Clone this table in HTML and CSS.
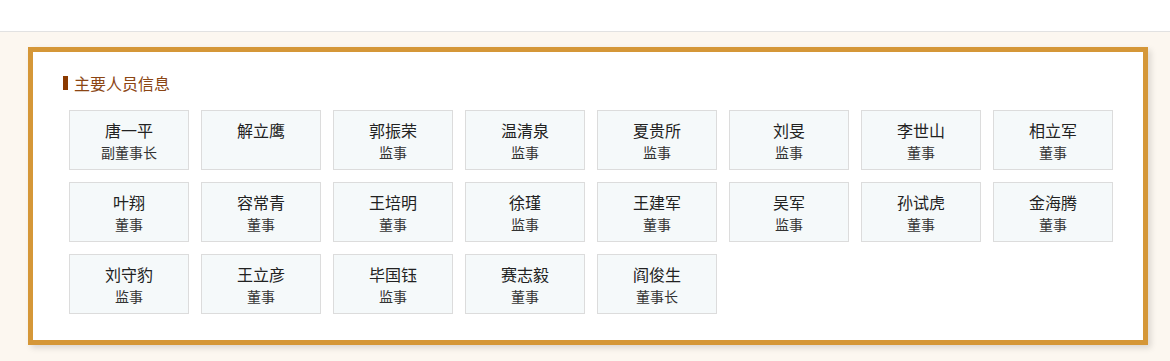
FILE: index.html
```html
<!DOCTYPE html>
<html lang="zh-CN">
<head>
<meta charset="utf-8">
<title>主要人员信息</title>
<link rel="stylesheet" href="styles.css">
</head>
<body>
<div class="topbar"></div>
<main class="page">
  <section class="card">
    <h2 class="title">主要人员信息</h2>
    <ul class="grid">
      <li class="person"><span class="name">唐一平</span><span class="role">副董事长</span></li>
      <li class="person"><span class="name">解立鹰</span><span class="role"></span></li>
      <li class="person"><span class="name">郭振荣</span><span class="role">监事</span></li>
      <li class="person"><span class="name">温清泉</span><span class="role">监事</span></li>
      <li class="person"><span class="name">夏贵所</span><span class="role">监事</span></li>
      <li class="person"><span class="name">刘旻</span><span class="role">监事</span></li>
      <li class="person"><span class="name">李世山</span><span class="role">董事</span></li>
      <li class="person"><span class="name">相立军</span><span class="role">董事</span></li>
      <li class="person"><span class="name">叶翔</span><span class="role">董事</span></li>
      <li class="person"><span class="name">容常青</span><span class="role">董事</span></li>
      <li class="person"><span class="name">王培明</span><span class="role">董事</span></li>
      <li class="person"><span class="name">徐瑾</span><span class="role">监事</span></li>
      <li class="person"><span class="name">王建军</span><span class="role">董事</span></li>
      <li class="person"><span class="name">吴军</span><span class="role">监事</span></li>
      <li class="person"><span class="name">孙试虎</span><span class="role">董事</span></li>
      <li class="person"><span class="name">金海腾</span><span class="role">董事</span></li>
      <li class="person"><span class="name">刘守豹</span><span class="role">监事</span></li>
      <li class="person"><span class="name">王立彦</span><span class="role">董事</span></li>
      <li class="person"><span class="name">毕国钰</span><span class="role">监事</span></li>
      <li class="person"><span class="name">赛志毅</span><span class="role">董事</span></li>
      <li class="person"><span class="name">阎俊生</span><span class="role">董事长</span></li>
    </ul>
  </section>
</main>
</body>
</html>
```
FILE: styles.css
```css
html, body {
  margin: 0;
  padding: 0;
}
body {
  font-family: "Noto Sans CJK SC", "Noto Sans", "Liberation Sans", sans-serif;
  background: #fcf7f0;
  color: #333;
  height: 361px;
  overflow: hidden;
}
.topbar {
  height: 31px;
  background: #ffffff;
  border-bottom: 1px solid #e2e2e2;
}
.page {
  padding: 15px 0 0 28px;
}
.card {
  box-sizing: border-box;
  width: 1120px;
  background: #ffffff;
  border: 5px solid #d59738;
  box-shadow: 3px 3px 6px rgba(0, 0, 0, 0.13);
  padding: 21px 0 26px 30px;
}
.title {
  margin: 0;
  display: flex;
  align-items: center;
  height: 20px;
  font-size: 16px;
  font-weight: normal;
  line-height: 20px;
  color: #8b4513;
}
.title::before {
  content: "";
  display: inline-block;
  width: 5px;
  height: 14px;
  margin-right: 6px;
  background: #8b3a00;
}
.grid {
  list-style: none;
  margin: 17px 0 0 6px;
  padding: 0;
  display: grid;
  grid-template-columns: repeat(8, 120px);
  gap: 12px;
}
.person {
  box-sizing: border-box;
  height: 60px;
  border: 1px solid #dcdcdc;
  background: #f5f9fa;
  padding-top: 8px;
  text-align: center;
  display: flex;
  flex-direction: column;
}
.name {
  font-size: 16px;
  line-height: 22px;
  color: #222;
}
.role {
  font-size: 14px;
  line-height: 22px;
  color: #333;
}
```
